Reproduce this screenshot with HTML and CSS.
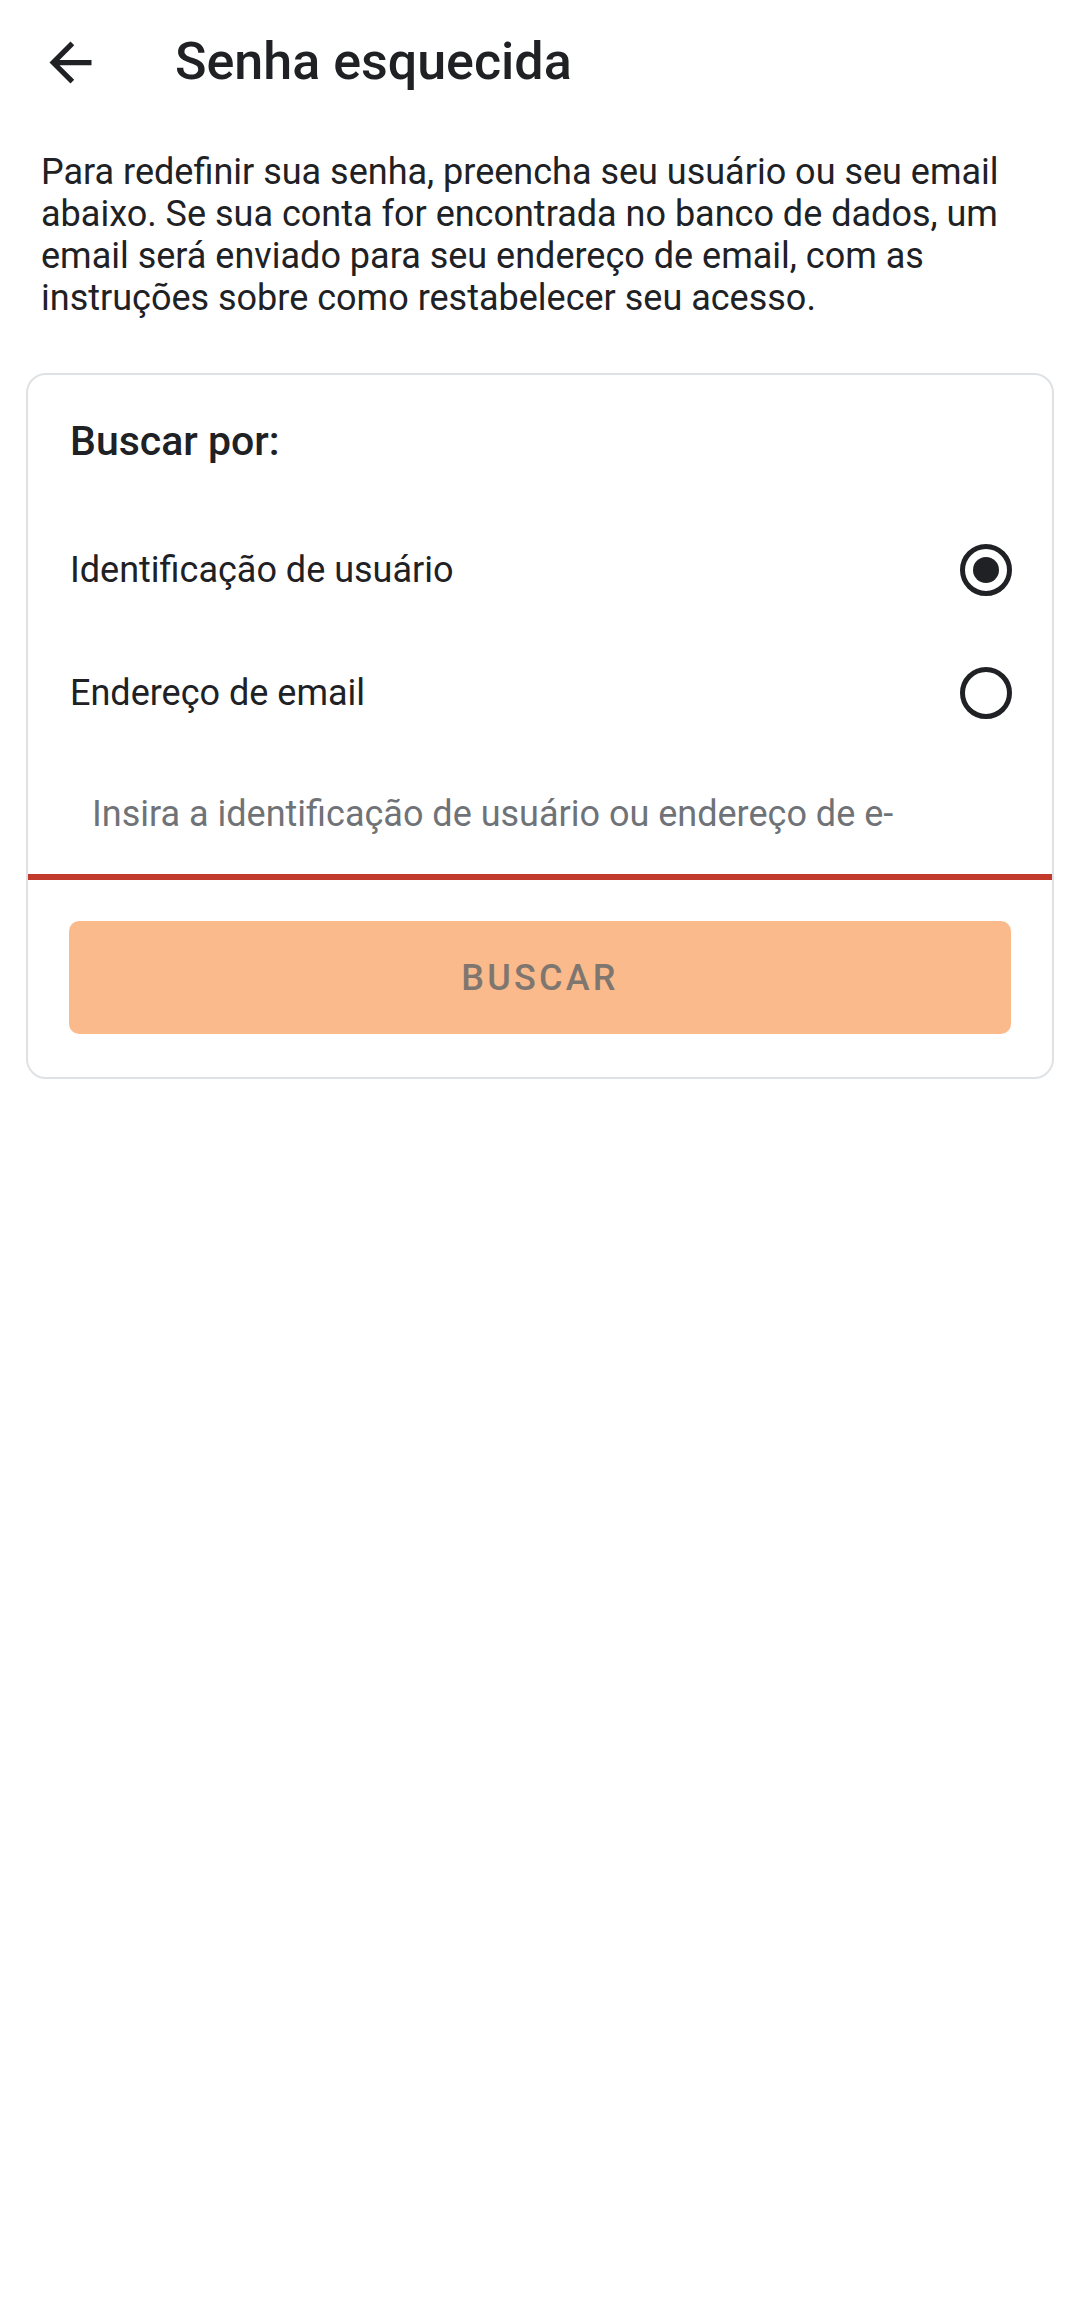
FILE: index.html
```html
<!DOCTYPE html>
<html lang="pt-BR">
<head>
<meta charset="utf-8">
<title>Senha esquecida</title>
<link rel="stylesheet" href="styles.css">
</head>
<body>
<div class="screen">
  <header class="toolbar">
    <span class="nav-icon">
      <svg viewBox="0 0 24 24" width="63" height="63"><path d="M20 11H7.83l5.59-5.59L12 4l-8 8 8 8 1.41-1.41L7.83 13H20v-2z"/></svg>
    </span>
    <h1 class="title">Senha esquecida</h1>
  </header>

  <p class="intro">Para redefinir sua senha, preencha seu usuário ou seu email abaixo. Se sua conta for encontrada no banco de dados, um email será enviado para seu endereço de email, com as instruções sobre como restabelecer seu acesso.</p>

  <section class="card">
    <h2 class="card-title">Buscar por:</h2>
    <div class="options">
      <div class="option">
        <span class="option-label">Identificação de usuário</span>
        <span class="radio checked"></span>
      </div>
      <div class="option">
        <span class="option-label">Endereço de email</span>
        <span class="radio"></span>
      </div>
    </div>
    <div class="field">
      <span class="placeholder">Insira a identificação de usuário ou endereço de e-</span>
    </div>
    <div class="actions">
      <div class="button">BUSCAR</div>
    </div>
  </section>
</div>
</body>
</html>
```

FILE: styles.css
```css
* { box-sizing: border-box; }

html, body {
  margin: 0;
  padding: 0;
  background: #ffffff;
}

body {
  font-family: Roboto, "Noto Sans", "Liberation Sans", sans-serif;
  color: #202124;
}

.screen {
  width: 1080px;
  min-height: 2313px;
  background: #ffffff;
}

.toolbar {
  height: 124px;
  display: flex;
  align-items: center;
  padding-left: 39px;
}

.nav-icon {
  width: 63px;
  height: 63px;
  display: flex;
  fill: #202124;
}

.title {
  margin: 0 0 0 73px;
  font-size: 52px;
  font-weight: 500;
  line-height: 60px;
  color: #202124;
}

.intro {
  margin: 27px 42px 0 41px;
  font-size: 36px;
  line-height: 42px;
  color: #202124;
}

.card {
  margin: 54px 26px 0 26px;
  border: 2px solid #dfe2e5;
  border-radius: 20px;
  background: #ffffff;
  padding-top: 42px;
  padding-bottom: 43px;
}

.card-title {
  margin: 0;
  padding-left: 42px;
  font-size: 41px;
  font-weight: 500;
  line-height: 48px;
  color: #202124;
}

.options {
  margin-top: 43px;
}

.option {
  height: 123px;
  display: flex;
  align-items: center;
  justify-content: space-between;
  padding: 0 40px 0 42px;
}

.option-label {
  font-size: 36px;
  line-height: 42px;
  color: #202124;
}

.radio {
  width: 52px;
  height: 52px;
  border-radius: 50%;
  border: 5px solid #202124;
  display: flex;
  align-items: center;
  justify-content: center;
}

.radio.checked::after {
  content: "";
  width: 26px;
  height: 26px;
  border-radius: 50%;
  background: #202124;
}

.field {
  height: 126px;
  display: flex;
  align-items: center;
  padding-left: 64px;
  border-bottom: 6px solid #c23a2b;
  overflow: hidden;
  white-space: nowrap;
}

.placeholder {
  font-size: 36px;
  line-height: 42px;
  color: #6f7378;
}

.actions {
  padding: 41px 41px 0 41px;
}

.button {
  height: 113px;
  border-radius: 10px;
  background: #fbba8b;
  display: flex;
  align-items: center;
  justify-content: center;
  font-size: 36px;
  font-weight: 500;
  letter-spacing: 3.2px;
  color: #807670;
}
```
